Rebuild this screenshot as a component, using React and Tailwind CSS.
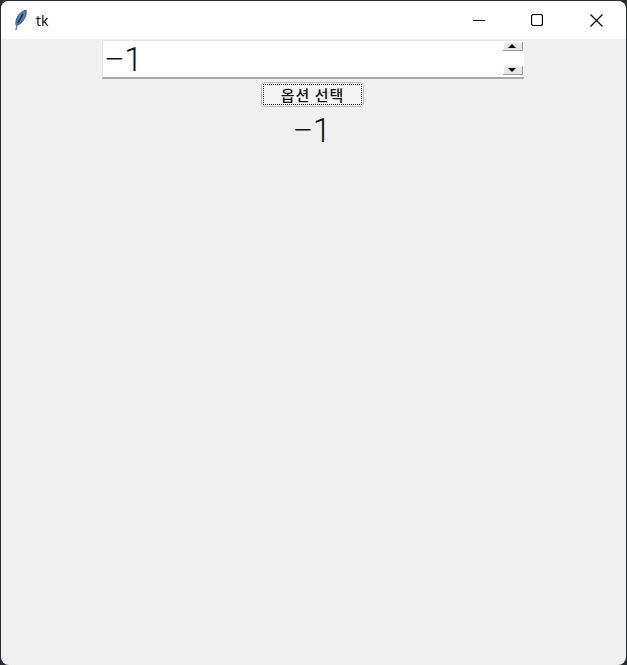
import React from "react";

function Feather() {
  return (
    <svg width="16" height="22" viewBox="0 0 16 22" className="block">
      <path d="M3 16 C2 10 6 3 13 1 C14 6 11 13 5 16 Z" fill="#4a7fc0" stroke="#4b5563" strokeWidth="1" />
      <path d="M10 5 L5 14" stroke="#1f2937" strokeWidth="1.5" fill="none" />
      <path d="M4 15 L3 21" stroke="#6b7280" strokeWidth="1.4" fill="none" />
    </svg>
  );
}

function SpinArrow({ up }) {
  return (
    <div className="w-[20px] h-[9px] bg-[#e6e6e6] border-r border-b border-[#9a9a9a] shadow-[inset_1px_1px_0_#fafafa] flex items-center justify-center">
      <svg width="8" height="4" viewBox="0 0 8 4" className="block">
        <path d={up ? "M0 4 L8 4 L4 0 Z" : "M0 0 L8 0 L4 4 Z"} fill="#111" />
      </svg>
    </div>
  );
}

function MinusOne() {
  return (
    <>
      <span className="font-['Noto_Sans_CJK_KR',sans-serif] font-light">−</span>
      <span className="ml-px font-['Roboto',sans-serif] font-light">1</span>
    </>
  );
}

export default function App() {
  return (
    <div className="w-[627px] h-[665px] bg-[#2a2c30] overflow-hidden pt-px pl-px pr-px">
      <div className="w-[625px] h-[664px] rounded-lg overflow-hidden bg-[#f0f0f0] flex flex-col">
        <div className="h-[38px] shrink-0 bg-white flex items-center text-black">
          <div className="ml-[12px] w-[16px] h-[22px]"><Feather /></div>
          <span className="ml-[7px] font-['Open_Sans','Liberation_Sans',sans-serif] text-[14px]">tk</span>
          <div className="ml-auto flex items-center h-full">
            <div className="w-[59px] h-full flex items-center justify-center">
              <svg width="12" height="12" viewBox="0 0 12 12"><path d="M0 6.5 H12" stroke="#000" strokeWidth="1.1" /></svg>
            </div>
            <div className="w-[59px] h-full flex items-center justify-center pr-[2px]">
              <svg width="12" height="12" viewBox="0 0 12 12"><rect x="0.5" y="0.5" width="11" height="11" rx="2" fill="none" stroke="#000" strokeWidth="1.2" /></svg>
            </div>
            <div className="w-[59px] h-full flex items-center justify-center">
              <svg width="13" height="13" viewBox="0 0 13 13"><path d="M0.5 0.5 L12.5 12.5 M12.5 0.5 L0.5 12.5" stroke="#000" strokeWidth="1.2" fill="none" /></svg>
            </div>
          </div>
        </div>
        <div className="flex flex-col items-center pr-[2px] text-[#111]">
          <div className="mt-px w-[422px] h-[39px] bg-white border-l border-t border-[#e4e4e4] border-b-2 border-b-[#a8a8a8] flex justify-between items-stretch">
            <span className="ml-[3px] text-[33px] leading-[32px] whitespace-nowrap"><MinusOne /></span>
            <div className="flex flex-col justify-between pt-px pb-[2px] mr-px">
              <SpinArrow up />
              <SpinArrow />
            </div>
          </div>
          <div className="mt-[3px] w-[103px] h-[25px] rounded-[4px] bg-[#f5f5f5] border border-[#bcbcbc] p-px">
            <div className="w-full h-full border border-dotted border-[#222] flex items-center justify-center text-[15px] leading-none font-medium tracking-[1px] font-['Noto_Sans_CJK_KR',sans-serif]">
              옵션 선택
            </div>
          </div>
          <div className="mt-[2px] text-[33px] leading-[38px] whitespace-nowrap"><MinusOne /></div>
        </div>
      </div>
    </div>
  );
}
